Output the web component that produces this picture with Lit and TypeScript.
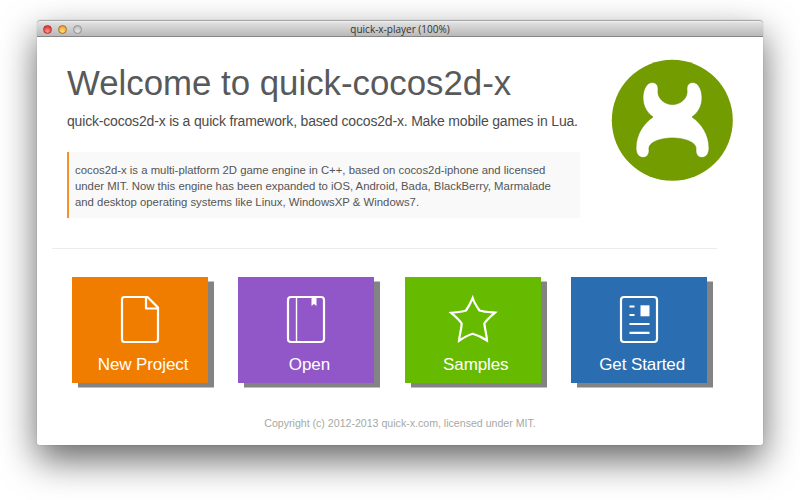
import { LitElement, html, css, svg } from "lit";
import { customElement, property } from "lit/decorators.js";

const icons: Record<string, unknown> = {
  file: svg`<path d="M26 1H4.500Q2 1 2 3.500V43.500Q2 46 4.500 46H35.500Q38 46 38 43.500V11.500L27.500 1ZM26 1.500V12.500H37.500"/>`,
  book: svg`<rect x="2" y="1" width="36" height="45" rx="3"/><path stroke-width="1.4" d="M10.500 1V46"/><path fill="#fff" stroke="none" d="M25.500 1h5v9l-2.500-2-2.500 2z"/>`,
  star: svg`<path stroke-linejoin="miter" d="M19.700 1.500C21.500 6 24 11 26.500 14.500C31 15.800 37 16.200 42 16.600C38 20 34 23.500 31.300 27.500C32 33.500 33.700 39 34 44.500C29.500 41.500 25 39.200 19.700 37.700C14.500 39.200 10 42 6 44.800C6.500 39 8.500 33.500 8.700 27.500C5.500 23 2-19.700 -2 16.800Z" style="display:none"/><path stroke-linejoin="miter" d="M19.700 2C21 6 24 11 26.500 14.500C31 16 37 16.200 42 16.600C38 20 34 23.500 31.300 27.500C32 33.500 33.700 39 34 44.500C29.500 41.500 25 39.200 19.700 37.700C14.500 39.200 10 42 6 44.800C6.500 39 8.500 33.500 8.700 27.500C6 23.500 2 20 -1.800 16.800C3 16.400 8.500 16 13 14.500C15.500 11 18 6 19.700 2Z"/>`,
  news: svg`<rect x="2" y="1" width="36" height="45" rx="3"/><path d="M10.500 10.500h5M10.500 19h5M10.500 28h20M10.500 36.800h20"/><path fill="#fff" stroke="none" d="M21.500 9.300h9v11h-9z"/>`,
};

@customElement("start-tile")
class StartTile extends LitElement {
  @property() icon = "file";
  @property() label = "";

  static styles = css`
    :host {
      display: flex;
      flex-direction: column;
      align-items: center;
      box-sizing: border-box;
      width: 136px;
      height: 106px;
      padding-top: 19px;
      color: #fff;
      box-shadow: 6px 4.500px 0 #838383;
    }
    .icon {
      width: 40px;
      height: 47px;
      overflow: visible;
      fill: none;
      stroke: #fff;
      stroke-width: 2.200;
      stroke-linejoin: round;
      flex: none;
    }
    .label {
      margin-top: 12px;
      padding-left: 6px;
      font-size: 17px;
      letter-spacing: -0.1px;
      line-height: 20px;
      white-space: nowrap;
    }
  `;

  render() {
    return html`<svg class="icon" viewBox="0 0 40 47">${icons[this.icon]}</svg>
      <span class="label">${this.label}</span>`;
  }
}

@customElement("app-root")
class AppRoot extends LitElement {
  static styles = css`
    :host {
      display: block;
      box-sizing: border-box;
      width: 800px;
      height: 500px;
      padding: 20px 37px 0;
      overflow: hidden;
      background: #fff;
      font-family: "Liberation Sans", Arial, sans-serif;
    }
    .window {
      height: 425px;
      width: 726px;
      background: #fff;
      border-radius: 4px 4px 2px 2px;
      box-shadow: 0 0 1px 0 rgba(0, 0, 0, 0.4), 0 15px 36px rgba(0, 0, 0, 0.6);
    }
    .bar {
      display: flex;
      align-items: center;
      box-sizing: border-box;
      height: 17px;
      padding: 1px 6px 0;
      border-top: 1px solid #a8a8a8;
      border-bottom: 1px solid #858585;
      border-radius: 4px 4px 0 0;
      background: linear-gradient(#f2f2f2, #dedede 2px, #b9b9b9);
    }
    .lights {
      display: flex;
      gap: 6px;
      width: 100px;
    }
    .light {
      box-sizing: border-box;
      width: 9px;
      height: 9px;
      border-radius: 50%;
    }
    .red {
      border: 1px solid #a33a38;
      background: radial-gradient(circle at 50% 75%, #ff9890, #e83b3b 70%);
    }
    .amber {
      border: 1px solid #a6702b;
      background: radial-gradient(circle at 50% 75%, #ffe27a, #efa52e 75%);
    }
    .off {
      border: 1px solid #949494;
      background: radial-gradient(circle at 50% 75%, #e4e4e4, #c0c0c0 75%);
    }
    .name {
      flex: 1;
      margin-right: 100px;
      text-align: center;
      font: 10px/14px "Open Sans", sans-serif;
      letter-spacing: 0;
      color: #333;
    }
    .head {
      display: flex;
      justify-content: space-between;
      height: 210px;
      padding: 1px 30px 0;
      color: #58595a;
    }
    h1 {
      margin: 25px 0 0;
      font-size: 34.800px;
      line-height: 40px;
      font-weight: 400;
      white-space: nowrap;
    }
    .tagline {
      margin: 9px 0 0;
      font-size: 14px;
      letter-spacing: -0.18px;
      line-height: 18px;
      color: #4b4b4b;
      white-space: nowrap;
    }
    .about {
      box-sizing: border-box;
      width: 513px;
      height: 66px;
      margin: 22px 0 0;
      padding: 10px 0 0 6px;
      border-left: 2px solid #f1922b;
      background: #f9f9f9;
      font-size: 11.350px;
      line-height: 16px;
      color: #555;
      white-space: nowrap;
    }
    .logo {
      width: 122px;
      height: 122px;
      margin-top: 21px;
      flex: none;
    }
    .rule {
      width: 665px;
      height: 1px;
      margin-left: 15px;
      background: #ececec;
    }
    .tiles {
      display: flex;
      gap: 30.400px;
      padding: 28px 0 0 35px;
    }
    .orange { background: #f17d00; }
    .purple { background: #9156c7; }
    .green { background: #66bb00; }
    .blue { background: #2a6db0; }
    .legal {
      margin-top: 33px;
      text-align: center;
      font-size: 10.600px;
      line-height: 14px;
      color: #a6a9a4;
    }
  `;

  render() {
    return html`
      <div class="window">
        <div class="bar">
          <div class="lights">
            <span class="light red"></span><span class="light amber"></span><span class="light off"></span>
          </div>
          <div class="name">quick-x-player (100%)</div>
        </div>
        <div class="head">
          <div>
            <h1>Welcome to quick-cocos2d-x</h1>
            <p class="tagline">quick-cocos2d-x is a quick framework, based cocos2d-x. Make mobile games in Lua.</p>
            <p class="about">
              cocos2d-x is a multi-platform 2D game engine in C++, based on cocos2d-iphone and licensed<br />
              under MIT. Now this engine has been expanded to iOS, Android, Bada, BlackBerry, Marmalade<br />
              and desktop operating systems like Linux, WindowsXP &amp; Windows7.
            </p>
          </div>
          <svg class="logo" viewBox="0 0 122 122">
            <circle cx="61.300" cy="61.300" r="60.500" fill="#739c00" />
            <path
              fill="#fff"
              stroke="#628b00"
              stroke-width=".6"
              d="M41 23.500C36 23.500 32 30 32 39C32 47 36 54 42 58C32 65 25 76 25 89C25 95 28 98.500 32 98.500C36 98.500 38.500 95 38 90.500C37 83 50 79 61.300 79C73 79 86 83 85 90.500C84.500 95 87 98.500 91 98.500C95 98.500 98 95 98 89C98 76 91 65 81 58C87 54 91 47 91 39C91 30 87 23.500 82 23.500C78 23.500 75.500 26 76 31C77 39 70 45.500 61.500 45.500C53 45.500 46 39 47 31C47.500 26 45 23.500 41 23.500Z"
            />
          </svg>
        </div>
        <div class="rule"></div>
        <div class="tiles">
          <start-tile class="orange" icon="file" label="New Project"></start-tile>
          <start-tile class="purple" icon="book" label="Open"></start-tile>
          <start-tile class="green" icon="star" label="Samples"></start-tile>
          <start-tile class="blue" icon="news" label="Get Started"></start-tile>
        </div>
        <div class="legal">Copyright (c) 2012-2013 quick-x.com, licensed under MIT.</div>
      </div>
    `;
  }
}
